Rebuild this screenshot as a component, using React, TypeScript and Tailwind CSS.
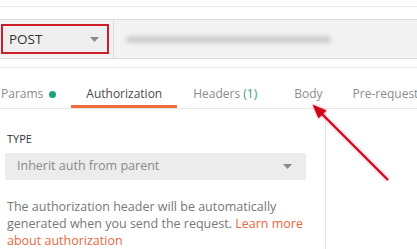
import React from "react"

function Caret({ className = "" }: { className?: string }) {
  return (
    <svg width="9" height="5" viewBox="0 0 9 5" className={className}>
      <path d="M0 0 L9 0 L4.5 5 Z" fill="#8a8a8a" />
    </svg>
  )
}

function Arrow() {
  return (
    <svg
      className="absolute left-0 top-0 pointer-events-none"
      width="417"
      height="249"
      viewBox="0 0 417 249"
      style={{ filter: "drop-shadow(0 0 1.5px rgba(220,0,0,0.45))" }}
    >
      <line x1="388" y1="180" x2="320" y2="112" stroke="#d0021b" strokeWidth="2.2" />
      <path d="M312.5 104.5 L326.5 110.5 L318.5 118.5 Z" fill="#d0021b" />
    </svg>
  )
}

export default function App() {
  return (
    <div
      className="relative w-[417px] h-[249px] overflow-hidden bg-white"
      style={{ fontFamily: "'Open Sans', 'Noto Sans', sans-serif" }}
    >
      {/* strip above the request bar */}
      <div className="h-[7px] border-b border-[#ececec]" />
      <div className="h-[12px]" />

      {/* request bar */}
      <div className="h-[40px] flex items-center bg-[#f2f2f2] border-y border-[#dcdcdc]">
        <div className="ml-[1px] w-[108px] h-[30px] flex items-center justify-between pl-[6px] pr-[8px] border-2 border-[#cc1f2b] bg-[#efefef]">
          <span className="text-[13.5px] text-[#333]">POST</span>
          <Caret />
        </div>
        <div className="ml-[4px] w-px h-[40px] bg-[#dcdcdc]" />
        <div className="flex-1 flex items-center pl-[12px]">
          <div className="w-[205px] h-[7px] rounded-full bg-[#cdcdcd] blur-[2px]" />
        </div>
      </div>

      <div className="h-[9px] border-b border-[#ececec]" />

      {/* tabs */}
      <div className="h-[41px] flex items-stretch border-b border-[#e6e6e6] text-[12px] whitespace-nowrap">
        <div className="-ml-[14px] px-[15px] pt-[12px] flex items-center gap-[6px] text-[#8c8c8c]">
          Params
          <span className="w-[7px] h-[7px] rounded-full bg-[#1aa37a]" />
        </div>
        <div className="px-[15px] pt-[15px] flex items-center text-[#4a4a4a] border-b-[3px] border-[#f26b3a]">
          Authorization
        </div>
        <div className="px-[16px] pt-[12px] flex items-center text-[#8c8c8c]">
          Headers&nbsp;<span className="text-[#3a9f86]">(1)</span>
        </div>
        <div className="px-[16px] ml-[5px] pt-[12px] flex items-center text-[#8c8c8c]">Body</div>
        <div className="px-[14px] pt-[12px] flex items-center text-[#8c8c8c]">Pre-request Script</div>
      </div>

      {/* auth panel */}
      <div className="flex h-[140px]">
        <div className="w-[326px] border-r border-[#e6e6e6] pl-[6px] pr-[20px] pt-[22px]">
          <div className="pl-[1px] text-[11px] text-[#333] leading-[16px]">TYPE</div>
          <div className="mt-[6px] -ml-[1px] w-[301px] h-[27px] rounded-[2px] bg-[#ececec] flex items-center justify-between pl-[12px] pr-[14px]">
            <span className="text-[12.5px] text-[#8a8a8a]">Inherit auth from parent</span>
            <Caret />
          </div>
          <p className="mt-[18px] pl-[1px] text-[12.5px] leading-[17px] text-[#777]">
            The authorization header will be automatically generated when you send the request.{" "}
            <span className="text-[#e8693f]">Learn more about authorization</span>
          </p>
        </div>
        <div className="flex-1" />
      </div>

      <Arrow />
    </div>
  )
}
